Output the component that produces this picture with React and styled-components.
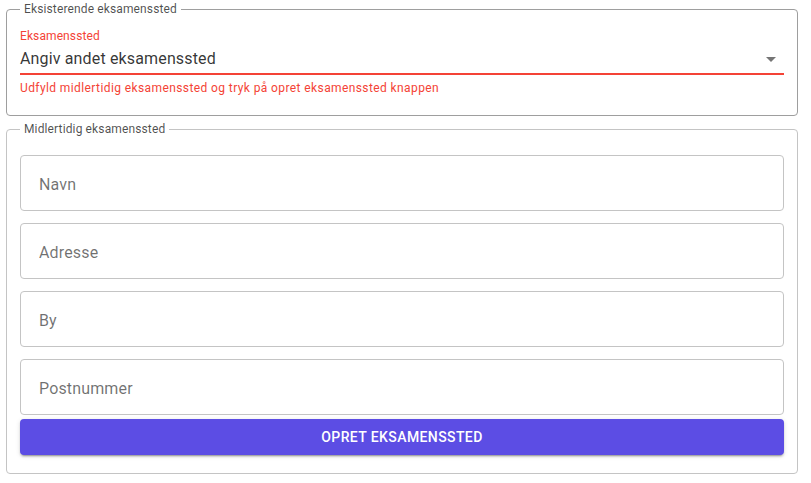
import React from "react";
import styled, { createGlobalStyle } from "styled-components";

const Global = createGlobalStyle`
  html, body { margin: 0; padding: 0; background: #fff; }
  body { font-family: Roboto, "Liberation Sans", Arial, sans-serif; }
  * { box-sizing: border-box; }
`;

const Page = styled.div`
  padding: 2px 13px 0 6px;
  display: flex;
  flex-direction: column;
  gap: 6px;
`;

const Group = styled.fieldset`
  margin: 0;
  padding: 0 13px ${(p) => p.$pb}px 13px;
  border: 1px solid ${(p) => p.$border};
  border-radius: 4px;
  min-width: 0;
`;

const Legend = styled.legend`
  padding: 0 4px;
  margin-left: 0;
  font-size: 12px;
  line-height: 14px;
  letter-spacing: 0.13px;
  color: rgba(0, 0, 0, 0.7);
`;

const SelectBlock = styled.div`
  padding-top: 13px;
  display: flex;
  flex-direction: column;
`;

const Label = styled.div`
  font-size: 12px;
  line-height: 14px;
  letter-spacing: 0.1px;
  color: #f44336;
`;

const SelectRow = styled.div`
  margin-top: 4px;
  display: flex;
  align-items: center;
  justify-content: space-between;
  padding-bottom: 2px;
  border-bottom: 2px solid #f44336;
`;

const Value = styled.span`
  font-size: 16px;
  line-height: 24px;
  letter-spacing: 0.15px;
  color: rgba(0, 0, 0, 0.8);
`;

const Arrow = styled.svg`
  width: 24px;
  height: 24px;
  fill: rgba(0, 0, 0, 0.54);
  margin-right: 1px;
`;

const Helper = styled.div`
  margin-top: 6px;
  font-size: 12px;
  line-height: 14px;
  letter-spacing: 0.4px;
  color: #f44336;
`;

const Fields = styled.div`
  padding-top: 19px;
  display: flex;
  flex-direction: column;
  gap: 12px;
`;

const Input = styled.input`
  height: 56px;
  width: 100%;
  border: 1px solid #c4c4c4;
  border-radius: 4px;
  padding: 2px 18px 0;
  font-family: inherit;
  font-size: 16px;
  letter-spacing: 0.15px;
  color: rgba(0, 0, 0, 0.87);
  outline: none;
  &::placeholder { color: rgba(0, 0, 0, 0.56); opacity: 1; }
`;

const Button = styled.button`
  margin-top: 4px;
  height: 36px;
  width: 100%;
  border: 0;
  border-radius: 4px;
  background: #5c4de4;
  color: #fff;
  font-family: inherit;
  font-size: 14px;
  font-weight: 500;
  letter-spacing: 0.4px;
  text-transform: uppercase;
  box-shadow: 0 3px 1px -2px rgba(0,0,0,0.2), 0 2px 2px 0 rgba(0,0,0,0.14), 0 1px 5px 0 rgba(0,0,0,0.12);
  cursor: pointer;
`;

const FieldsWrap = styled.div`
  display: flex;
  flex-direction: column;
`;

export default function App() {
  return (
    <>
      <Global />
      <Page>
        <Group $border="#9e9e9e" $pb={20}>
          <Legend>Eksisterende eksamenssted</Legend>
          <SelectBlock>
            <Label>Eksamenssted</Label>
            <SelectRow>
              <Value>Angiv andet eksamenssted</Value>
              <Arrow viewBox="0 0 24 24"><path d="M7 10l5 5 5-5z" /></Arrow>
            </SelectRow>
            <Helper>Udfyld midlertidig eksamenssted og tryk på opret eksamenssted knappen</Helper>
          </SelectBlock>
        </Group>
        <Group $border="#c4c4c4" $pb={18}>
          <Legend>Midlertidig eksamenssted</Legend>
          <FieldsWrap>
            <Fields>
              <Input placeholder="Navn" />
              <Input placeholder="Adresse" />
              <Input placeholder="By" />
              <Input placeholder="Postnummer" />
            </Fields>
            <Button>Opret eksamenssted</Button>
          </FieldsWrap>
        </Group>
      </Page>
    </>
  );
}
